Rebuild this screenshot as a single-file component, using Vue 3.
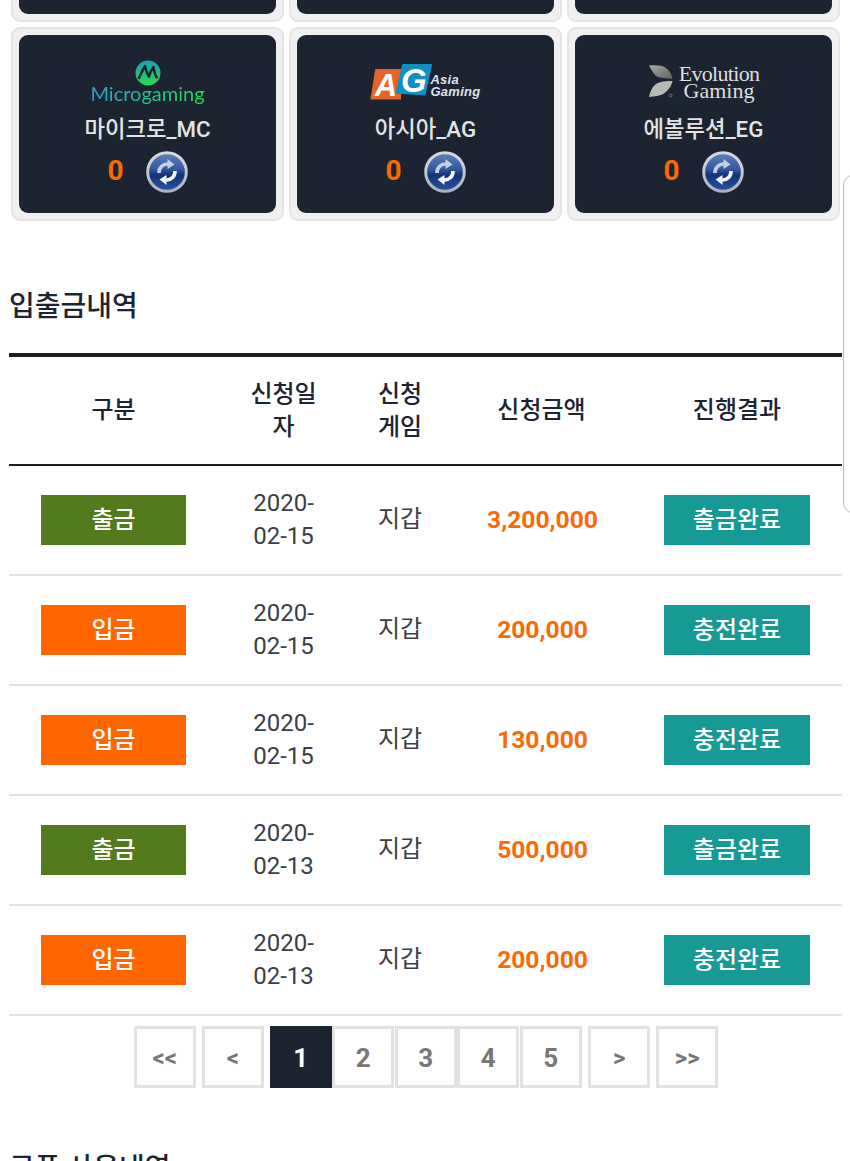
<template>
  <div class="page">
    <div class="games">
      <div v-for="n in 3" :key="n" class="game-card">
        <div class="game-inner"></div>
      </div>
      <div v-for="g in games" :key="g.name" class="game-card">
        <div class="game-inner">
          <div class="logo">
            <div v-if="g.logo === 'mg'" class="logo-mg">
              <svg width="26" height="26" viewBox="0 0 26 26">
                <defs>
                  <linearGradient id="mgGrad" x1="0" y1="0" x2="0" y2="1">
                    <stop offset="0" stop-color="#1f9fb4" />
                    <stop offset="1" stop-color="#27da4c" />
                  </linearGradient>
                </defs>
                <circle cx="13" cy="13" r="12.5" fill="url(#mgGrad)" />
                <path d="M3.5 19 C6 14 8 9 10 6 C11 10 12 14 14 16.5 C15 12 17 9 18.5 7 C19.5 12 20 16 22.5 18" fill="none" stroke="#1b2330" stroke-width="2.4" stroke-linejoin="round" />
              </svg>
              <span class="mg-text">Microgaming</span>
            </div>
            <div v-else-if="g.logo === 'ag'" class="logo-ag">
              <div class="ag-marks">
                <span class="ag-a">A</span>
                <span class="ag-g">G</span>
              </div>
              <div class="ag-text">Asia<br />Gaming</div>
            </div>
            <div v-else class="logo-eg">
              <svg width="25" height="33" viewBox="0 0 25 33">
                <defs>
                  <linearGradient id="egTop" x1="0" y1="0" x2="1" y2="1">
                    <stop offset="0" stop-color="#a8a8a8" />
                    <stop offset="1" stop-color="#5f5f5f" />
                  </linearGradient>
                </defs>
                <path d="M0 .5 C7 0 13 0 17 3 C21 6 23 10 23.5 14 C18 13.5 13 13 9 12 C5 10 3 6 0 .5 Z" fill="url(#egTop)" />
                <path d="M23.5 16 C22 23 16 30 8 31 L0 32 C1 27 3 22 7 19 C12 16 18 16 23.5 16 Z" fill="#b9b9b9" />
                <circle cx="21.5" cy="30.5" r="1.5" fill="none" stroke="#8f8f8f" stroke-width=".7" />
              </svg>
              <div class="eg-text"><span class="eg-first">Evolution</span><br />Gaming</div>
            </div>
          </div>
          <div class="game-name">{{ g.name }}</div>
          <div class="game-balance">
            <span class="balance-num">0</span>
            <svg class="refresh" width="42" height="42" viewBox="0 0 42 42">
              <defs>
                <linearGradient id="ballGrad" x1="0" y1="0" x2="0" y2="1">
                  <stop offset="0" stop-color="#5f80bd" />
                  <stop offset="0.42" stop-color="#345a9f" />
                  <stop offset="0.58" stop-color="#123377" />
                  <stop offset="1" stop-color="#2a55a8" />
                </linearGradient>
                <linearGradient id="ringGrad" x1="0" y1="0" x2="0" y2="1">
                  <stop offset="0" stop-color="#d8dadd" />
                  <stop offset="1" stop-color="#aeb4bd" />
                </linearGradient>
              </defs>
              <circle cx="21" cy="21" r="19.3" fill="url(#ballGrad)" stroke="url(#ringGrad)" stroke-width="3" />
              <path d="M13 22 A8.5 8.5 0 0 1 22 13" fill="none" stroke="#c3d0e6" stroke-width="3.6" />
              <path d="M21.5 8 L28.5 13.5 L21.5 18 Z" fill="#c3d0e6" />
              <g transform="rotate(180 21 21)">
                <path d="M13 22 A8.5 8.5 0 0 1 22 13" fill="none" stroke="#f4f7fc" stroke-width="3.6" />
                <path d="M21.5 8 L28.5 13.5 L21.5 18 Z" fill="#f4f7fc" />
              </g>
            </svg>
          </div>
        </div>
      </div>
    </div>

    <h2 class="section-title">입출금내역</h2>

    <table class="history">
      <colgroup>
        <col class="c1" /><col class="c2" /><col class="c3" /><col class="c4" /><col class="c5" />
      </colgroup>
      <thead>
        <tr>
          <th>구분</th>
          <th>신청일자</th>
          <th>신청게임</th>
          <th>신청금액</th>
          <th>진행결과</th>
        </tr>
      </thead>
      <tbody>
        <tr v-for="(r, i) in rows" :key="i">
          <td><span class="tag type" :class="r.type === '출금' ? 'tag-out' : 'tag-in'">{{ r.type }}</span></td>
          <td>{{ r.date }}</td>
          <td>지갑</td>
          <td class="amount">{{ r.amount }}</td>
          <td><span class="tag tag-done">{{ r.type === '출금' ? '출금완료' : '충전완료' }}</span></td>
        </tr>
      </tbody>
    </table>

    <div class="pager">
      <a class="pg sep">&lt;&lt;</a>
      <a class="pg sep">&lt;</a>
      <a class="pg num active">1</a>
      <a class="pg num">2</a>
      <a class="pg num">3</a>
      <a class="pg num">4</a>
      <a class="pg num last">5</a>
      <a class="pg sep">&gt;</a>
      <a class="pg">&gt;&gt;</a>
    </div>

    <h2 class="section-title second">쿠폰 사용내역</h2>

    <div class="scroll-handle"></div>
  </div>
</template>

<script setup>
const games = [
  { name: '마이크로_MC', logo: 'mg' },
  { name: '아시아_AG', logo: 'ag' },
  { name: '에볼루션_EG', logo: 'eg' }
]

const rows = [
  { type: '출금', date: '2020-02-15', amount: '3,200,000' },
  { type: '입금', date: '2020-02-15', amount: '200,000' },
  { type: '입금', date: '2020-02-15', amount: '130,000' },
  { type: '출금', date: '2020-02-13', amount: '500,000' },
  { type: '입금', date: '2020-02-13', amount: '200,000' }
]
</script>

<style>
html, body {
  margin: 0;
  background: #fff;
  overflow: hidden;
}
</style>

<style scoped>
.page {
  position: relative;
  width: 850px;
  height: 1161px;
  overflow: hidden;
  background: #fff;
  font-family: Roboto, "Noto Sans CJK KR", sans-serif;
  color: #1c2431;
}

.games {
  display: grid;
  grid-template-columns: repeat(3, 273px);
  gap: 5px;
  margin: -172px 0 0 11px;
}

.game-card {
  box-sizing: border-box;
  height: 194px;
  padding: 6px;
  background: #f0f0f0;
  border: 2px solid #e4e4e4;
  border-radius: 9px;
}

.game-inner {
  height: 100%;
  box-sizing: border-box;
  padding-top: 24px;
  background: #1c2431;
  border-radius: 9px;
  color: #e4e4e4;
  text-align: center;
}

.logo {
  height: 46px;
  display: flex;
  justify-content: center;
  align-items: center;
}

.logo-mg {
  display: flex;
  flex-direction: column;
  align-items: center;
}

.mg-text {
  font-family: Lato, sans-serif;
  font-size: 20px;
  font-weight: 400;
  line-height: 24px;
  margin-top: -5px;
  background: linear-gradient(90deg, #2f9fd0, #22c98a 60%, #2fd64a);
  -webkit-background-clip: text;
  background-clip: text;
  color: transparent;
}

.logo-ag {
  display: flex;
  align-items: flex-start;
  margin-top: -1px;
  color: #fff;
}

.ag-marks {
  display: flex;
  align-items: flex-end;
  height: 36px;
}

.ag-a,
.ag-g {
  display: block;
  font-family: "Liberation Sans", sans-serif;
  font-style: italic;
  font-weight: 700;
  text-align: center;
}

.ag-a {
  width: 31px;
  height: 31px;
  font-size: 31px;
  line-height: 33px;
  background: #e4642a;
  clip-path: polygon(16% 0, 100% 0, 100% 100%, 0 100%);
}

.ag-g {
  width: 37px;
  height: 32px;
  font-size: 33px;
  line-height: 33px;
  margin: 0 0 4px -6px;
  background: #0f8fc4;
  clip-path: polygon(19% 0, 100% 0, 81% 100%, 0 94%);
}

.ag-text {
  font-family: "Liberation Sans", sans-serif;
  font-style: italic;
  font-weight: 700;
  font-size: 13px;
  line-height: 12px;
  letter-spacing: 0.3px;
  text-align: left;
  margin: 10px 0 0 -2px;
  color: #dfe3e8;
}

.logo-eg {
  display: flex;
  align-items: center;
  gap: 5px;
  margin: -1px 0 0 1px;
}

.eg-text {
  font-family: "Liberation Serif", serif;
  font-size: 22px;
  line-height: 17px;
  color: #dedede;
}

.eg-first {
  letter-spacing: -0.7px;
}

.game-name {
  margin-top: 9px;
  font-size: 22.3px;
  font-weight: 500;
  line-height: 30px;
}

.game-balance {
  display: flex;
  justify-content: center;
  align-items: center;
  gap: 22px;
  margin-top: 7px;
}

.balance-num {
  font-size: 28px;
  font-weight: 700;
  color: #f96a05;
  width: 16px;
  margin-bottom: 3px;
}

.section-title {
  margin: 0;
  padding: 66px 0 0 9px;
  font-size: 28px;
  font-weight: 500;
  line-height: 40px;
  color: #1c2431;
}

.history {
  width: 833px;
  margin: 26px 0 0 9px;
  border-collapse: collapse;
  table-layout: fixed;
  font-size: 24px;
  line-height: 33px;
}

.c1 { width: 209px; }
.c2 { width: 131px; }
.c3 { width: 102px; }
.c4 { width: 181px; }
.c5 { width: 210px; }

.history thead tr {
  border-top: 4px solid #1c1e26;
  border-bottom: 2px solid #1c1e26;
}

.history th {
  height: 110px;
  padding: 0 25px;
  box-sizing: border-box;
  font-weight: 500;
  color: #1c2431;
}

.history th:nth-child(1),
.history th:nth-child(4),
.history th:nth-child(5) {
  padding: 0;
}

.history th:nth-child(2) {
  padding: 0 32px;
}

.history td {
  height: 110px;
  padding: 0 20px;
  box-sizing: border-box;
  text-align: center;
  color: #3a3f47;
  border-bottom: 2px solid #e2e2e2;
}

.history td:nth-child(2) {
  padding: 0 30px;
}

.history td:nth-child(3) {
  padding-bottom: 2px;
}

.history td.amount {
  font-size: 24.6px;
  font-weight: 700;
  color: #f96a05;
  padding: 0 19px 2px 21px;
}

.tag {
  display: inline-block;
  width: 146px;
  height: 50px;
  line-height: 50px;
  font-weight: 500;
  color: #fff;
  vertical-align: middle;
}

.tag.type { width: 145px; }
.tag-out { background: #537a1d; }
.tag-in { background: #ff6600; }
.tag-done { background: #179a95; }

.pager {
  display: flex;
  justify-content: center;
  margin-top: 10px;
  padding-left: 2px;
}

.pg {
  box-sizing: border-box;
  width: 62px;
  height: 62px;
  border: 3px solid #e2e2e2;
  font-size: 24px;
  font-weight: 700;
  line-height: 59px;
  text-align: center;
  color: #777;
}

.pg.sep { margin-right: 6px; }
.pg.num { margin-right: 0.5px; font-size: 26px; }
.pg.last { margin-right: 6.5px; }

.pg.active {
  background: #1c2431;
  border-color: #1c2431;
  color: #fff;
}

.section-title.second {
  padding-top: 61px;
}

.scroll-handle {
  position: absolute;
  left: 843px;
  top: 175px;
  width: 20px;
  height: 338px;
  box-sizing: border-box;
  background: #fff;
  border: 1px solid #bdbdbd;
  border-radius: 10px;
}
</style>
